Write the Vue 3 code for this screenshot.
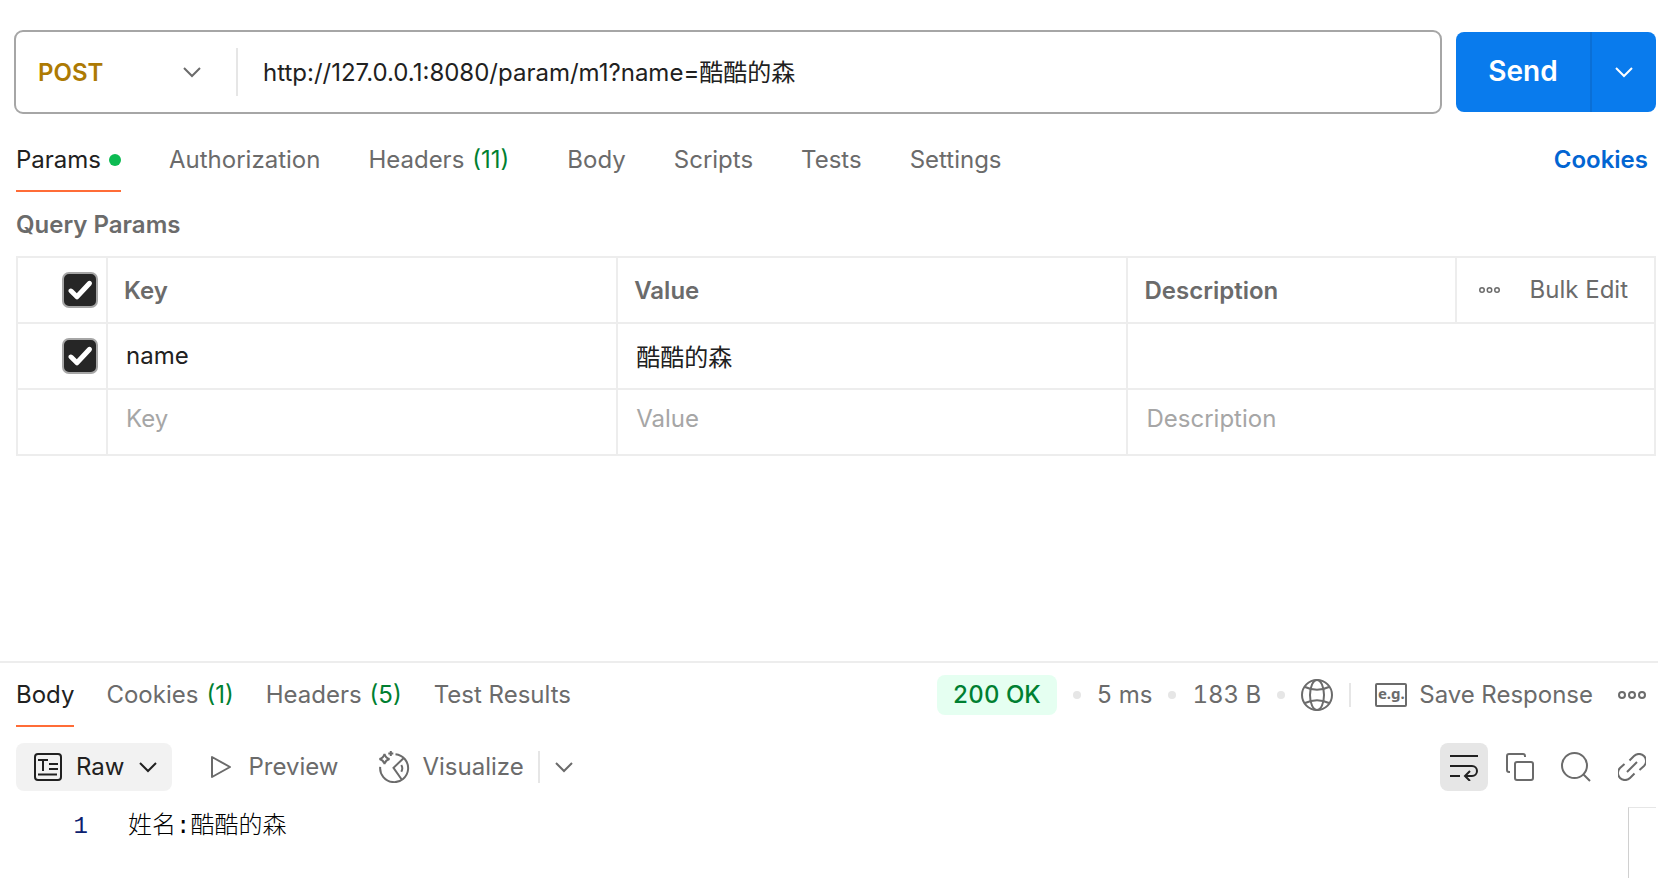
<script setup>
import { ref } from 'vue'

const method = ref('POST')
const methods = ['GET', 'POST', 'PUT', 'PATCH', 'DELETE']
const url = ref('http://127.0.0.1:8080/param/m1?name=酷酷的森')

const requestTabs = [
  { label: 'Params', dot: true },
  { label: 'Authorization' },
  { label: 'Headers', count: 11 },
  { label: 'Body' },
  { label: 'Scripts' },
  { label: 'Tests' },
  { label: 'Settings' },
]
const activeRequestTab = ref('Params')

const responseTabs = [
  { label: 'Body' },
  { label: 'Cookies', count: 1 },
  { label: 'Headers', count: 5 },
  { label: 'Test Results' },
]
const activeResponseTab = ref('Body')

const allEnabled = ref(true)
const params = ref([{ enabled: true, key: 'name', value: '酷酷的森', description: '' }])
const draft = ref({ key: '', value: '', description: '' })

const lines = ['姓名:酷酷的森']
</script>

<template>
  <main class="app">
    <section class="request" aria-label="Request">
      <form class="request-line" @submit.prevent>
        <div class="url-box">
          <div class="method">
            <select v-model="method" aria-label="HTTP method">
              <option v-for="m in methods" :key="m">{{ m }}</option>
            </select>
            <svg class="chevron" viewBox="0 0 20 12" aria-hidden="true"><path d="M2 2l8 8 8-8" /></svg>
          </div>
          <input v-model="url" class="url" type="text" aria-label="Request URL" spellcheck="false" />
        </div>
        <div class="send">
          <button class="send-main" type="submit">Send</button>
          <button class="send-more" type="button" aria-label="Send options">
            <svg class="chevron" viewBox="0 0 20 12" aria-hidden="true"><path d="M2 2l8 8 8-8" /></svg>
          </button>
        </div>
      </form>

      <nav class="tabs wide" aria-label="Request settings">
        <button
          v-for="tab in requestTabs"
          :key="tab.label"
          type="button"
          class="tab"
          :class="{ active: tab.label === activeRequestTab }"
          @click="activeRequestTab = tab.label"
        >
          <span>{{ tab.label }}</span>
          <span v-if="tab.count" class="count">({{ tab.count }})</span>
          <span v-if="tab.dot" class="dot"></span>
        </button>
        <a class="cookies" href="#cookies">Cookies</a>
      </nav>

      <h2 class="title">Query Params</h2>

      <table class="params">
        <colgroup>
          <col class="col-check" />
          <col class="col-text" />
          <col class="col-text" />
          <col />
          <col class="col-actions" />
        </colgroup>
        <thead>
          <tr>
            <td class="check-cell">
              <input v-model="allEnabled" class="check" type="checkbox" aria-label="Enable all params" />
            </td>
            <th scope="col">Key</th>
            <th scope="col">Value</th>
            <th scope="col">Description</th>
            <td>
              <div class="actions">
                <button class="icon-button" type="button" aria-label="More columns">
                  <svg class="more small" viewBox="0 0 28 8" aria-hidden="true">
                    <circle cx="4" cy="4" r="3" /><circle cx="14" cy="4" r="3" /><circle cx="24" cy="4" r="3" />
                  </svg>
                </button>
                <button class="text-button" type="button">Bulk Edit</button>
              </div>
            </td>
          </tr>
        </thead>
        <tbody>
          <tr v-for="(p, i) in params" :key="i">
            <td class="check-cell">
              <input v-model="p.enabled" class="check" type="checkbox" aria-label="Enable param" />
            </td>
            <td><input v-model="p.key" class="field" type="text" aria-label="Key" /></td>
            <td><input v-model="p.value" class="field" type="text" aria-label="Value" /></td>
            <td colspan="2"><input v-model="p.description" class="field" type="text" aria-label="Description" /></td>
          </tr>
          <tr class="draft">
            <td></td>
            <td><input v-model="draft.key" class="field" type="text" placeholder="Key" aria-label="New key" /></td>
            <td><input v-model="draft.value" class="field" type="text" placeholder="Value" aria-label="New value" /></td>
            <td colspan="2">
              <input v-model="draft.description" class="field" type="text" placeholder="Description" aria-label="New description" />
            </td>
          </tr>
        </tbody>
      </table>
    </section>

    <section class="response" aria-label="Response">
      <div class="response-head">
        <nav class="tabs" aria-label="Response views">
          <button
            v-for="tab in responseTabs"
            :key="tab.label"
            type="button"
            class="tab"
            :class="{ active: tab.label === activeResponseTab }"
            @click="activeResponseTab = tab.label"
          >
            <span>{{ tab.label }}</span>
            <span v-if="tab.count" class="count">({{ tab.count }})</span>
          </button>
        </nav>
        <div class="status">
          <span class="pill">200 OK</span>
          <span class="bullet"></span>
          <span>5 ms</span>
          <span class="bullet"></span>
          <span>183 B</span>
          <span class="bullet"></span>
          <button class="icon-button" type="button" aria-label="Network information">
            <svg class="line i32" viewBox="0 0 32 32" aria-hidden="true">
              <circle cx="16" cy="16" r="15" />
              <ellipse cx="16" cy="16" rx="7" ry="15" />
              <path d="M4 8q12 5.500 24 0M4 24q12-5.500 24 0" />
            </svg>
          </button>
          <span class="rule"></span>
          <button class="save" type="button">
            <span class="eg" aria-hidden="true">e.g.</span>
            <span>Save Response</span>
          </button>
          <button class="icon-button" type="button" aria-label="More response actions">
            <svg class="more" viewBox="0 0 28 8" aria-hidden="true">
              <circle cx="4" cy="4" r="3" /><circle cx="14" cy="4" r="3" /><circle cx="24" cy="4" r="3" />
            </svg>
          </button>
        </div>
      </div>

      <div class="toolbar">
        <button class="raw" type="button">
          <svg class="line i28" viewBox="0 0 28 28" aria-hidden="true">
            <rect x="1" y="1" width="26" height="26" rx="3" />
            <path d="M4 7h10M9 7v11M15 11h9M15 16h9M4 21.500h19" />
          </svg>
          <span>Raw</span>
          <svg class="chevron" viewBox="0 0 20 12" aria-hidden="true"><path d="M2 2l8 8 8-8" /></svg>
        </button>
        <button class="view preview" type="button">
          <svg class="line play" viewBox="0 0 22 24" aria-hidden="true"><path d="M2 2v20l18-10z" /></svg>
          <span>Preview</span>
        </button>
        <button class="view" type="button">
          <svg class="line i32" viewBox="0 0 32 32" aria-hidden="true">
            <path d="M17.500 3.200A14 14 0 1 1 2.200 15.800" />
            <path d="M25.500 7.200L15.500 16.800l8 11.400M23.300 14q2 3.300 0 6.800" />
            <path d="M6.500 3q1 4 5 5-4 1-5 5-1-4-5-5 4-1 5-5zM12.800 0v5M10.300 2.500h5" />
          </svg>
          <span>Visualize</span>
        </button>
        <span class="rule tall"></span>
        <button class="icon-button" type="button" aria-label="Visualize options">
          <svg class="chevron" viewBox="0 0 20 12" aria-hidden="true"><path d="M2 2l8 8 8-8" /></svg>
        </button>
        <div class="tools">
          <button class="wrap" type="button" aria-label="Wrap lines" aria-pressed="true">
            <svg class="line i28" viewBox="0 0 28 28" aria-hidden="true">
              <path d="M0 3h28M0 13h22a5 5 0 0 1 0 10h-6M0 23h10M20 18l-5 5 5 5" />
            </svg>
          </button>
          <button class="icon-button" type="button" aria-label="Copy">
            <svg class="line i28" viewBox="0 0 28 28" aria-hidden="true">
              <path d="M4 19H3a2 2 0 0 1-2-2V3a2 2 0 0 1 2-2h14a2 2 0 0 1 2 2v1" />
              <rect x="9" y="9" width="18" height="18" rx="2" />
            </svg>
          </button>
          <button class="icon-button" type="button" aria-label="Search">
            <svg class="line i30" viewBox="0 0 30 30" aria-hidden="true">
              <circle cx="13.500" cy="13.500" r="12.500" /><path d="M22 22l7 7" />
            </svg>
          </button>
          <button class="icon-button" type="button" aria-label="Copy link">
            <svg class="line i28" viewBox="0 0 28 28" aria-hidden="true">
              <path d="M11.500 7.500l4.500-4.500a7 7 0 0 1 10 10l-4.500 4M16.500 20.500l-4.500 4.500a7 7 0 0 1-10-10l4.500-4M9 19L19 9" />
            </svg>
          </button>
        </div>
      </div>

      <div class="viewer">
        <ol class="code">
          <li v-for="(line, i) in lines" :key="i">
            <span class="number">{{ i + 1 }}</span>
            <code>{{ line }}</code>
          </li>
        </ol>
        <div class="minimap"></div>
      </div>
    </section>
  </main>
</template>

<style>
body {
  margin: 0;
  background: #fff;
}
</style>

<style scoped>
.app {
  display: flex;
  flex-direction: column;
  min-height: 100vh;
  box-sizing: border-box;
  font: 400 24px/32px Inter, "Noto Sans CJK SC", sans-serif;
  color: #6b6b6b;
}
.app *,
.app *::after {
  box-sizing: border-box;
}
button,
input,
select {
  margin: 0;
  padding: 0;
  border: 0;
  background: none;
  font: inherit;
  color: inherit;
  outline: none;
}
button {
  cursor: pointer;
}
svg {
  display: block;
  flex: none;
  fill: none;
  stroke: currentColor;
  stroke-width: 2;
}
.chevron {
  width: 20px;
  height: 12px;
}
.more {
  width: 28px;
  height: 8px;
}
.more.small {
  width: 21px;
  height: 6px;
}
.i28 {
  width: 28px;
  height: 28px;
}
.i30 {
  width: 30px;
  height: 30px;
}
.i32 {
  width: 32px;
  height: 32px;
}
.play {
  width: 22px;
  height: 24px;
  stroke-linejoin: round;
}
.icon-button {
  display: flex;
  align-items: center;
}

.request {
  flex: 1;
  padding: 30px 2px 16px 16px;
}
.request-line {
  display: flex;
  align-items: center;
  gap: 14px;
  margin-left: -2px;
}
.url-box {
  display: flex;
  flex: 1;
  align-items: center;
  height: 84px;
  border: 2px solid #a6a6a6;
  border-radius: 9px;
}
.method {
  display: grid;
  align-items: center;
  width: 222px;
  height: 48px;
  border-right: 2px solid #e6e6e6;
  color: #ad7a03;
  font-weight: 600;
}
.method select {
  grid-area: 1 / 1;
  width: 100%;
  height: 48px;
  padding: 2px 0 0 22px;
  appearance: none;
}
.method .chevron {
  grid-area: 1 / 1;
  justify-self: end;
  margin-right: 34px;
  color: #6b6b6b;
  pointer-events: none;
}
.url {
  flex: 1;
  min-width: 0;
  height: 48px;
  padding: 0 24px 4px 25px;
  color: #212121;
}
.send {
  display: flex;
  height: 80px;
  border-radius: 8px;
  overflow: hidden;
  background: #097bed;
  color: #fff;
}
.send-main {
  width: 134px;
  padding-bottom: 2px;
  font-size: 28px;
  font-weight: 600;
}
.send-more {
  display: grid;
  place-items: center;
  width: 66px;
  border-left: 2px solid #0a6fd6;
}

.tabs {
  display: flex;
  gap: 32px;
  height: 64px;
}
.tabs.wide {
  gap: 48px;
  margin-top: 14px;
}
.tab {
  display: flex;
  align-items: center;
  gap: 8px;
  white-space: nowrap;
}
.tab.active {
  color: #212121;
  box-shadow: inset 0 -2px #ff6c37;
}
.count {
  color: #007f31;
}
.wide .count {
  padding-right: 10px;
}
.dot {
  width: 12px;
  height: 12px;
  border-radius: 50%;
  background: #0cbb52;
}
.cookies {
  align-self: center;
  margin-left: auto;
  padding-right: 8px;
  color: #0265d2;
  font-weight: 600;
  text-decoration: none;
}
.title {
  margin: 0;
  padding-top: 2px;
  font-size: 24px;
  font-weight: 600;
  line-height: 62px;
}

.params {
  width: 100%;
  table-layout: fixed;
  border-collapse: collapse;
}
.params th,
.params td {
  height: 66px;
  padding: 0;
  border: 2px solid #ededed;
}
.params th {
  padding: 2px 0 0 16px;
  font-weight: 600;
  text-align: left;
}
.col-check {
  width: 90px;
}
.col-text {
  width: 31.15%;
}
.col-actions {
  width: 199px;
}
.check-cell {
  vertical-align: middle;
}
.check {
  display: grid;
  place-items: center;
  width: 36px;
  height: 36px;
  margin: 0 8px 0 auto;
  border: 2px solid #a6a6a6;
  border-radius: 7px;
  background: #fff;
  appearance: none;
}
.check:checked {
  background: #262626;
}
.check:checked::after {
  content: "";
  width: 24px;
  height: 20px;
  background: #fff;
  clip-path: path("M0.500 11.500Q0 9 2.500 8.500Q4 8.500 5 9.500L8.800 13.300L19.500 1.800Q21 0.200 23 1.200Q25 3 23.400 5L10.500 18.800Q9 20 7.500 18.800L1.200 12.600Z");
}
.field {
  display: block;
  width: 100%;
  height: 48px;
  padding: 0 18px 2px;
  color: #212121;
}
.field::placeholder {
  color: #a6a6a6;
  opacity: 1;
}
.params .draft td {
  padding-bottom: 6px;
}
.actions {
  display: flex;
  align-items: center;
  justify-content: space-between;
  padding: 0 26px 0 22px;
}
.text-button {
  white-space: nowrap;
}

.response {
  display: flex;
  flex-direction: column;
  min-height: 217px;
  padding-left: 16px;
  border-top: 2px solid #ededed;
}
.response-head {
  display: flex;
  justify-content: space-between;
  padding-right: 12px;
}
.status {
  display: flex;
  align-items: center;
  gap: 16px;
  white-space: nowrap;
  font-variant-numeric: tabular-nums;
}
.pill {
  padding: 4px 16px;
  border-radius: 8px;
  background: #e5fff1;
  color: #007f31;
  font-weight: 500;
}
.bullet {
  width: 8px;
  height: 8px;
  border-radius: 50%;
  background: #e6e6e6;
}
.rule {
  width: 2px;
  height: 24px;
  background: #e6e6e6;
}
.rule.tall {
  height: 32px;
}
.save {
  display: flex;
  align-items: center;
  gap: 12px;
  margin: 0 9px 0 8px;
}
.eg {
  width: 32px;
  height: 24px;
  border: 2px solid #6b6b6b;
  border-radius: 2px;
  font: 700 15px/17px "Noto Sans", sans-serif;
}

.toolbar {
  display: flex;
  align-items: center;
  padding: 16px 12px 0 0;
}
.raw {
  display: flex;
  align-items: center;
  gap: 14px;
  height: 48px;
  padding: 0 14px 0 18px;
  border-radius: 8px;
  background: #f2f2f2;
  color: #212121;
}
.view {
  display: flex;
  align-items: center;
  gap: 12px;
}
.preview {
  gap: 16px;
  margin: 0 40px 0 38px;
}
.rule.tall {
  margin: 0 14px;
}
.tools {
  display: flex;
  align-items: center;
  gap: 27px;
  margin-left: auto;
}
.wrap {
  display: grid;
  place-items: center;
  width: 48px;
  height: 48px;
  margin-right: -9px;
  border-radius: 8px;
  background: #e6e6e6;
  color: #212121;
}
.viewer {
  display: flex;
  flex: 1;
  margin-top: 16px;
}
.code {
  flex: 1;
  margin: 0;
  padding: 2px 0 0;
  list-style: none;
  line-height: 36px;
}
.code li {
  display: flex;
}
.number {
  width: 72px;
  color: #0b216f;
  font-family: "Liberation Mono", monospace;
  text-align: right;
}
.code code {
  margin-left: 40px;
  color: #000;
  font-family: "Liberation Mono", "Noto Sans CJK SC", monospace;
  font-weight: 300;
}
.minimap {
  width: 28px;
  margin-right: 2px;
  border-top: 1px solid #e6e6e6;
  border-left: 1px solid #d0d0d0;
}
</style>
